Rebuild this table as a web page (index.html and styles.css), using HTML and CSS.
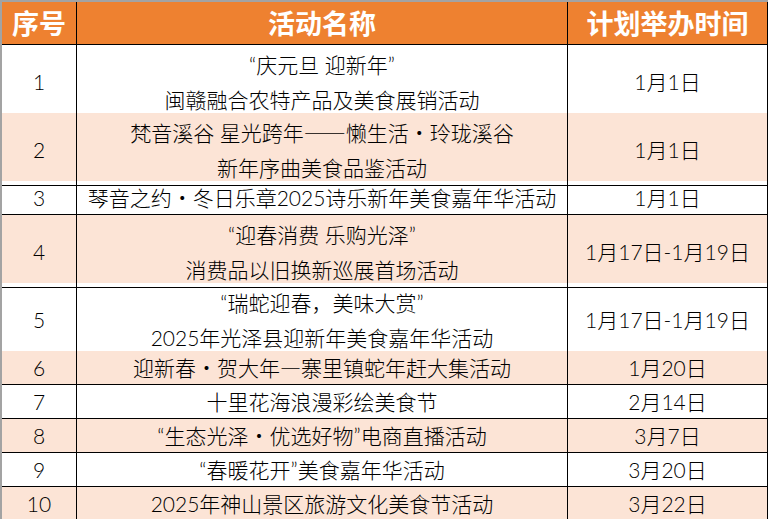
FILE: index.html
```html
<!DOCTYPE html>
<html lang="zh-CN">
<head>
<meta charset="utf-8">
<title>活动表</title>
<link rel="stylesheet" href="styles.css">
</head>
<body>
<div class="sheet">
  <div class="row head">
    <div class="cell c1">序号</div>
    <div class="cell c2">活动名称</div>
    <div class="cell c3">计划举办时间</div>
  </div>
  <div class="row dbl">
    <div class="cell c1">1</div>
    <div class="cell c2"><span>“庆元旦 迎新年”</span><span>闽赣融合农特产品及美食展销活动</span></div>
    <div class="cell c3">1月1日</div>
  </div>
  <div class="row dbl alt">
    <div class="cell c1">2</div>
    <div class="cell c2"><span>梵音溪谷 星光跨年<em class="cjk">——</em>懒生活・玲珑溪谷</span><span>新年序曲美食品鉴活动</span></div>
    <div class="cell c3">1月1日</div>
  </div>
  <div class="row">
    <div class="cell c1">3</div>
    <div class="cell c2">琴音之约・冬日乐章2025诗乐新年美食嘉年华活动</div>
    <div class="cell c3">1月1日</div>
  </div>
  <div class="row dbl alt">
    <div class="cell c1">4</div>
    <div class="cell c2"><span>“迎春消费 乐购光泽”</span><span>消费品以旧换新巡展首场活动</span></div>
    <div class="cell c3">1月17日-1月19日</div>
  </div>
  <div class="row dbl">
    <div class="cell c1">5</div>
    <div class="cell c2"><span>“瑞蛇迎春，美味大赏”</span><span>2025年光泽县迎新年美食嘉年华活动</span></div>
    <div class="cell c3">1月17日-1月19日</div>
  </div>
  <div class="row alt">
    <div class="cell c1">6</div>
    <div class="cell c2"><span>迎新春・贺大年<em class="cjk">—</em>寨里镇蛇年赶大集活动</span></div>
    <div class="cell c3">1月20日</div>
  </div>
  <div class="row">
    <div class="cell c1">7</div>
    <div class="cell c2">十里花海浪漫彩绘美食节</div>
    <div class="cell c3">2月14日</div>
  </div>
  <div class="row alt">
    <div class="cell c1">8</div>
    <div class="cell c2">“生态光泽・优选好物”电商直播活动</div>
    <div class="cell c3">3月7日</div>
  </div>
  <div class="row">
    <div class="cell c1">9</div>
    <div class="cell c2">“春暖花开”美食嘉年华活动</div>
    <div class="cell c3">3月20日</div>
  </div>
  <div class="row alt">
    <div class="cell c1">10</div>
    <div class="cell c2">2025年神山景区旅游文化美食节活动</div>
    <div class="cell c3">3月22日</div>
  </div>
</div>
</body>
</html>
```
FILE: styles.css
```css
html, body {
  margin: 0;
  padding: 0;
  background: #ffffff;
}
body {
  width: 768px;
  height: 519px;
  overflow: hidden;
}
.sheet {
  display: flex;
  flex-direction: column;
  border-top: 2px solid #a3a3a3;
  border-left: 2px solid #a3a3a3;
  font-family: "Lato", "Noto Sans CJK SC", sans-serif;
  font-size: 21px;
  font-weight: 300;
  color: #000000;
}
.row {
  display: grid;
  grid-template-columns: 75px 491px 200px;
  height: 34px;
}
.row.dbl {
  height: 68px;
}
.row.head {
  height: 43px;
  background: #ee8130;
  color: #ffffff;
  font-family: "Noto Sans CJK SC", sans-serif;
  font-weight: 700;
  font-size: 27px;
}
.row.alt {
  background: #fce4d6;
}
.cell {
  box-sizing: border-box;
  border-right: 1px solid #000000;
  border-bottom: 1px solid #000000;
  display: flex;
  flex-direction: column;
  align-items: center;
  justify-content: center;
  line-height: 33px;
  white-space: nowrap;
}
.row.head .cell {
  line-height: 40px;
}
.row.dbl .cell.c2 {
  line-height: 35px;
  padding-top: 2px;
}
.c2 span {
  display: block;
}
.cjk {
  font-style: normal;
  font-family: "Noto Sans CJK SC", sans-serif;
}
```
